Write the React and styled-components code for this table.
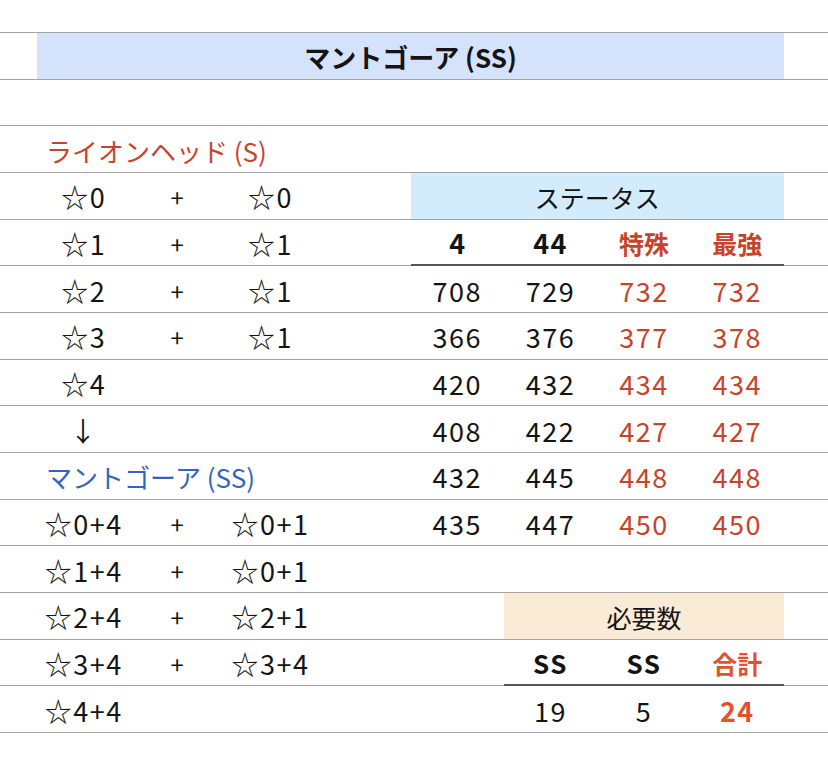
import React from 'react';
import styled, { createGlobalStyle } from 'styled-components';

const GlobalStyle = createGlobalStyle`
  html, body {
    margin: 0;
    padding: 0;
    background: #ffffff;
  }
  body {
    font-family: "Noto Sans CJK JP", "Noto Sans", sans-serif;
    color: #141414;
  }
`;

const tones = {
  ink: '#141414',
  red: '#c7432c',
  blue: '#3464be',
  orange: '#e1532f',
};

const left = [
  ['☆0', '+', '☆0'],
  ['☆1', '+', '☆1'],
  ['☆2', '+', '☆1'],
  ['☆3', '+', '☆1'],
  ['☆4', '', ''],
  ['↓', '', ''],
];

const left2 = [
  ['☆0+4', '+', '☆0+1'],
  ['☆1+4', '+', '☆0+1'],
  ['☆2+4', '+', '☆2+1'],
  ['☆3+4', '+', '☆3+4'],
  ['☆4+4', '', ''],
];

const stats = [
  [708, 729, 732, 732],
  [366, 376, 377, 378],
  [420, 432, 434, 434],
  [408, 422, 427, 427],
  [432, 445, 448, 448],
  [435, 447, 450, 450],
];

const App = () => {
  // rows 4..15 of the sheet: left block + right block side by side
  const body = [];
  const leftAll = [...left, 'mantogoa', ...left2];

  leftAll.forEach((l, i) => {
    const cells = [];
    if (l === 'mantogoa') {
      cells.push(
        <Cell key="l" $col={2} $span={4} $left $size={26} $tone="blue">
          マントゴーア (SS)
        </Cell>
      );
    } else {
      cells.push(<Cell key="a" $col={2} $num>{l[0]}</Cell>);
      cells.push(<Cell key="b" $col={3} $size={24}>{l[1]}</Cell>);
      cells.push(<Cell key="c" $col={4} $num>{l[2]}</Cell>);
    }

    if (i === 0) {
      cells.push(
        <Cell key="s" $col={6} $span={4} $size={25} $bg="#d3ecfb">
          ステータス
        </Cell>
      );
    } else if (i === 1) {
      cells.push(<Cell key="h1" $col={6} $bold $rule>4</Cell>);
      cells.push(<Cell key="h2" $col={7} $bold $rule $num>44</Cell>);
      cells.push(<Cell key="h3" $col={8} $bold $rule $size={25} $tone="red">特殊</Cell>);
      cells.push(<Cell key="h4" $col={9} $bold $rule $size={25} $tone="red">最強</Cell>);
    } else if (i - 2 < stats.length) {
      const s = stats[i - 2];
      cells.push(<Cell key="v1" $col={6} $num>{s[0]}</Cell>);
      cells.push(<Cell key="v2" $col={7} $num>{s[1]}</Cell>);
      cells.push(<Cell key="v3" $col={8} $num $tone="red">{s[2]}</Cell>);
      cells.push(<Cell key="v4" $col={9} $num $tone="red">{s[3]}</Cell>);
    } else if (i === 9) {
      cells.push(
        <Cell key="n" $col={7} $span={3} $size={25} $bg="#faebd7">
          必要数
        </Cell>
      );
    } else if (i === 10) {
      cells.push(<Cell key="n1" $col={7} $bold $rule $size={26} $num>SS</Cell>);
      cells.push(<Cell key="n2" $col={8} $bold $rule $size={26} $num>SS</Cell>);
      cells.push(<Cell key="n3" $col={9} $bold $rule $size={25} $tone="orange">合計</Cell>);
    } else if (i === 11) {
      cells.push(<Cell key="t1" $col={7} $num>19</Cell>);
      cells.push(<Cell key="t2" $col={8} $num>5</Cell>);
      cells.push(<Cell key="t3" $col={9} $bold $num $tone="orange">24</Cell>);
    }

    body.push(<Row key={i}>{cells}</Row>);
  });

  return (
    <>
      <GlobalStyle />
      <Page>
        <Sheet>
          <Row>
            <Cell $col={2} $span={8} $bold $size={26} $bg="#d5e2fb">
              マントゴーア (SS)
            </Cell>
          </Row>
          <Row />
          <Row>
            <Cell $col={2} $span={4} $left $size={26} $tone="red">
              ライオンヘッド (S)
            </Cell>
          </Row>
          {body}
        </Sheet>
      </Page>
    </>
  );
};

const Page = styled.div`
  width: 828px;
  height: 773px;
  padding-top: 32px;
  box-sizing: border-box;
  overflow: hidden;
`;

const Sheet = styled.div`
  border-top: 1px solid #a3a3a3;
`;

const Row = styled.div`
  display: grid;
  grid-template-columns: 37px repeat(8, 93.375px) 1fr;
  height: 46.667px;
  box-sizing: border-box;
  border-bottom: 1px solid #a3a3a3;
`;

const Cell = styled.div`
  grid-column: ${({ $col }) => $col} / span ${({ $span }) => $span || 1};
  display: flex;
  align-items: center;
  justify-content: ${({ $left }) => ($left ? 'flex-start' : 'center')};
  padding-left: ${({ $left }) => ($left ? '9px' : '0')};
  padding-top: 2px;
  font-size: ${({ $size }) => $size || 27}px;
  font-weight: ${({ $bold }) => ($bold ? 700 : 400)};
  letter-spacing: ${({ $num }) => ($num ? '1.5px' : '0')};
  color: ${({ $tone }) => tones[$tone || 'ink']};
  background: ${({ $bg }) => $bg || 'transparent'};
  white-space: nowrap;
  box-sizing: border-box;
  ${({ $rule }) =>
    $rule &&
    `
    border-bottom: 2px solid #555555;
    margin-bottom: -1px;
  `}
`;

export default App;
